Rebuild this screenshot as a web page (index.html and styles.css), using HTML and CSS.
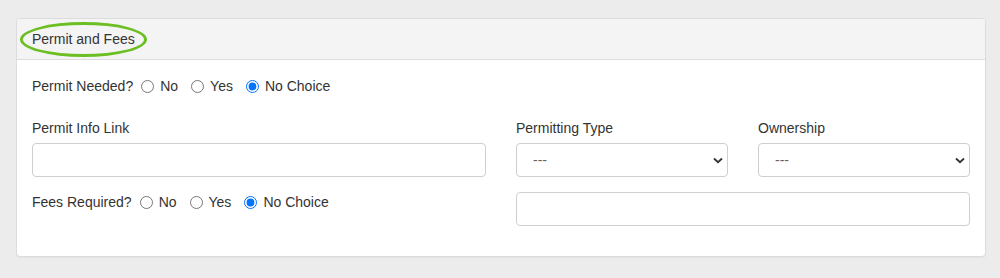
FILE: index.html
```html
<!DOCTYPE html>
<html>
<head>
  <link rel="stylesheet" href="styles.css">
</head>
<body>
  <div class="page">
    <div class="panel">
      <div class="panel-heading">
        <span class="circled"></span>
        Permit and Fees
      </div>
      <div class="panel-body">
        <div class="radio-row permit-row">
          <span class="radio-label">Permit Needed?</span>
          <label class="opt"><input type="radio" name="permit"> No</label>
          <label class="opt"><input type="radio" name="permit"> Yes</label>
          <label class="opt"><input type="radio" name="permit" checked> No Choice</label>
        </div>

        <div class="row">
          <div class="col">
            <div class="form-group">
              <label class="field-label">Permit Info Link</label>
              <input class="form-control" type="text">
            </div>
            <div class="radio-row">
              <span class="radio-label">Fees Required?</span>
              <label class="opt"><input type="radio" name="fees"> No</label>
              <label class="opt"><input type="radio" name="fees"> Yes</label>
              <label class="opt"><input type="radio" name="fees" checked> No Choice</label>
            </div>
          </div>

          <div class="col sub-grid">
            <div class="form-group">
              <label class="field-label">Permitting Type</label>
              <div class="select-wrap">
                <select class="form-control"><option>---</option></select>
                <svg class="chevron" width="10" height="7" viewBox="0 0 10 7"><path d="M1 1.5 L5 5.2 L9 1.5" stroke="#333" stroke-width="1.8" fill="none"/></svg>
              </div>
            </div>
            <div class="form-group">
              <label class="field-label">Ownership</label>
              <div class="select-wrap">
                <select class="form-control"><option>---</option></select>
                <svg class="chevron" width="10" height="7" viewBox="0 0 10 7"><path d="M1 1.5 L5 5.2 L9 1.5" stroke="#333" stroke-width="1.8" fill="none"/></svg>
              </div>
            </div>
            <div class="form-group span-2">
              <input class="form-control" type="text">
            </div>
          </div>
        </div>
      </div>
    </div>
  </div>
</body>
</html>
```

FILE: styles.css
```css
body {
  margin: 0;
  background: #ececec;
  font-family: "Liberation Sans", Arial, Helvetica, sans-serif;
  font-size: 14px;
  line-height: 20px;
  color: #333;
}

.page {
  padding: 18px 14px 20px 16px;
}

.panel {
  background: #fff;
  border: 1px solid #dcdcdc;
  border-radius: 4px;
  box-shadow: 0 1px 1px rgba(0,0,0,0.04);
}

.panel-heading {
  position: relative;
  background: #f4f4f4;
  border-bottom: 1px solid #dcdcdc;
  border-radius: 4px 4px 0 0;
  padding: 10px 15px;
}

.circled {
  position: absolute;
  left: 3px;
  top: 3px;
  width: 121px;
  height: 29px;
  border: 3px solid #6cbf22;
  border-radius: 50%;
}

.panel-body {
  padding: 16px 15px 15px;
}

.radio-row {
  display: flex;
  align-items: center;
  height: 20px;
}

.permit-row {
  margin-bottom: 22px;
}

.radio-label {
  margin-right: 8px;
}

.opt {
  display: flex;
  align-items: center;
  margin-right: 13px;
}

.opt input {
  width: 13px;
  height: 13px;
  margin: 0 6px 0 0;
}

.row {
  display: grid;
  grid-template-columns: 1fr 1fr;
  column-gap: 30px;
}

.sub-grid {
  display: grid;
  grid-template-columns: 1fr 1fr;
  column-gap: 30px;
  align-content: start;
}

.span-2 {
  grid-column: 1 / 3;
}

.form-group {
  margin-bottom: 15px;
}

.field-label {
  display: block;
  margin-bottom: 5px;
}

.form-control {
  display: block;
  box-sizing: border-box;
  width: 100%;
  height: 34px;
  border: 1px solid #cfcfcf;
  border-radius: 4px;
  background: #fff;
  font-family: inherit;
  font-size: 14px;
  padding: 6px 12px;
}

.select-wrap {
  position: relative;
}

.select-wrap select {
  appearance: none;
  -webkit-appearance: none;
  color: #666;
  padding-left: 16px;
}

.chevron {
  position: absolute;
  right: 5px;
  top: 14px;
  pointer-events: none;
}
```
